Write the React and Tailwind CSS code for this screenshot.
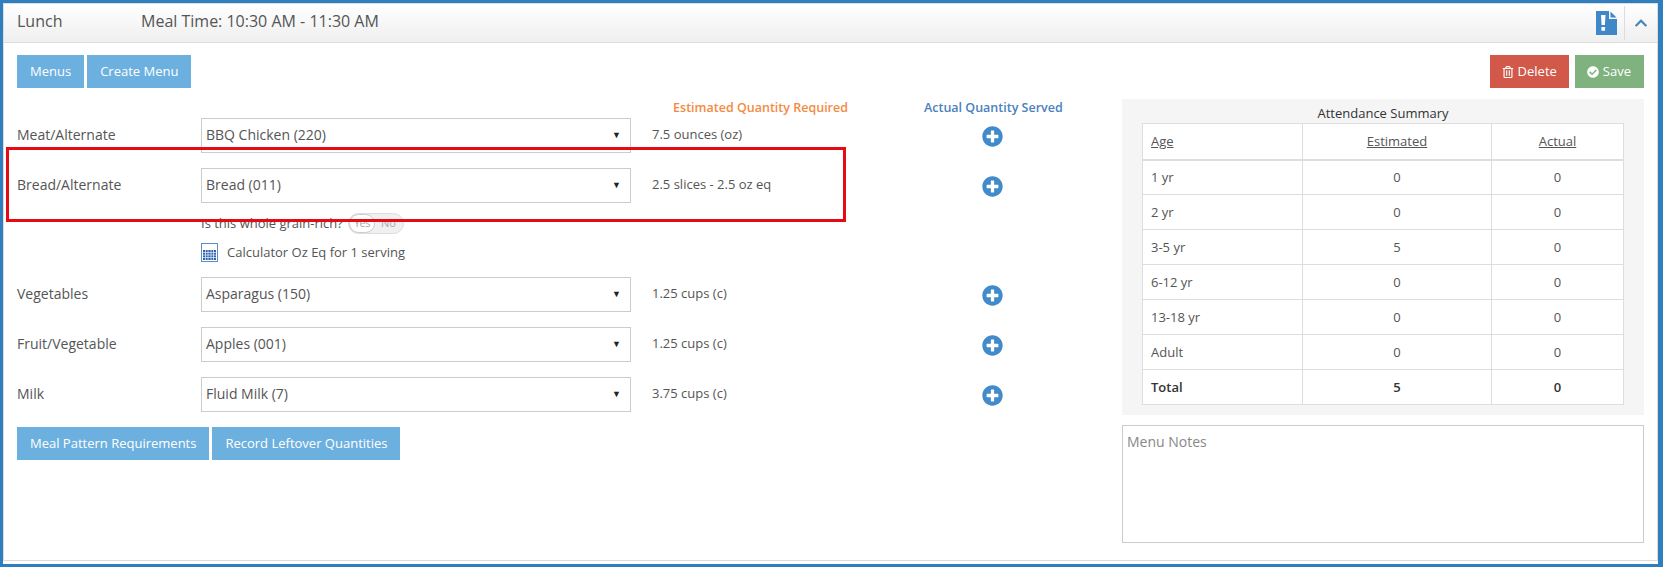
import React from 'react';
import { FaCheckCircle, FaChevronUp, FaPlusCircle, FaRegTrashAlt } from 'react-icons/fa';

const ageRows = [
  ['1 yr', 0, 0],
  ['2 yr', 0, 0],
  ['3-5 yr', 5, 0],
  ['6-12 yr', 0, 0],
  ['13-18 yr', 0, 0],
  ['Adult', 0, 0],
];

const Btn = ({ children, className = 'bg-[#6cb0e0]' }) => (
  <button className={`h-[33px] px-[13px] text-[13px] text-white ${className}`}>{children}</button>
);

const MealRow = ({ label, food, qty, className = '' }) => (
  <div className={`flex h-[35px] items-center ${className}`}>
    <div className="w-[184px] pb-[2px] text-[14px] text-[#555]">{label}</div>
    <div className="flex h-[35px] w-[430px] items-center justify-between border border-[#ccc] pb-[2px] pl-[4px] pr-[9px] text-[14px] text-[#555]">
      <span>{food}</span>
      <span className="text-[9px] text-[#222]">▼</span>
    </div>
    <div className="ml-[21px] w-[300px] pb-[2px] text-[#555]">{qty}</div>
    <div className="flex w-[81px] justify-center pt-[2px] text-[#428bca]">
      <FaPlusCircle size={21} />
    </div>
  </div>
);

const DocAlert = () => (
  <svg width="21" height="24" viewBox="0 0 21 24">
    <path d="M0 0h13v8h8v16H0z" fill="#3f87c6" />
    <path d="M14.5 0.5l6 6h-6z" fill="#3f87c6" />
    <path d="M5 4h4.5l-.6 10H5.6z M5.4 16h3.7v3.7H5.4z" fill="#fff" />
  </svg>
);

const CalcIcon = () => (
  <svg width="17" height="19" viewBox="0 0 17 19" fill="none">
    <rect x="0.5" y="0.5" width="16" height="18" fill="#fff" stroke="#5b8fc7" />
    <rect x="2" y="7" width="13" height="10" fill="#2f62a8" />
    <path d="M2 9.5h13M2 12h13M2 14.5h13M4.5 7v10M7 7v10M10 7v10M12.5 7v10" stroke="#dce8f5" strokeWidth="0.8" />
  </svg>
);

const App = () => {
  return (
    <div className="relative h-[567px] border-t-[3px] border-r-[5px] border-b-[3px] border-l-[3px] border-[#2f7ebd] bg-white font-['Open_Sans',sans-serif] text-[13px] text-[#555]">
      <div className="h-[558px] border border-[#ddd]">
        <div className="flex h-[39px] items-center border-b border-[#ddd] bg-gradient-to-b from-white to-[#efefef] pl-[13px]">
          <div className="w-[124px] pb-[4px] text-[16px] text-[#555]">Lunch</div>
          <div className="pb-[4px] text-[16px] text-[#555]">Meal Time: 10:30 AM - 11:30 AM</div>
          <div className="ml-auto flex h-[34px] items-center">
            <DocAlert />
            <div className="ml-[7px] flex h-[34px] w-[33px] items-center justify-center border-l border-[#ddd] text-[#4a86b8]">
              <FaChevronUp size={14} />
            </div>
          </div>
        </div>

        <div className="flex items-start justify-between pl-[13px] pr-[13px] pt-[12px]">
          <div className="w-[1016px] shrink-0">
            <div className="flex gap-[3px]">
              <Btn>Menus</Btn>
              <Btn>Create Menu</Btn>
            </div>

            <div className="mt-[10px] flex h-[20px] items-center whitespace-nowrap text-[12.5px] font-semibold">
              <div className="w-[831px] shrink-0 text-right text-[#f58a42]">Estimated Quantity Required</div>
              <div className="ml-[76px] text-[#4a7fc0]">Actual Quantity Served</div>
            </div>

            <MealRow label="Meat/Alternate" food="BBQ Chicken (220)" qty="7.5 ounces (oz)" />
            <MealRow className="mt-[15px]" label="Bread/Alternate" food="Bread (011)" qty="2.5 slices - 2.5 oz eq" />

            <div className="ml-[184px] mt-[10px] flex h-[21px] items-center">
              <span>Is this whole grain-rich?</span>
              <span className="ml-[5px] flex h-[21px] w-[56px] items-center rounded-full border border-[#ddd] bg-[#f0f0f0] text-[11px] text-[#aaa]">
                <span className="flex h-[19px] w-[26px] items-center justify-center rounded-full border border-[#ccc] bg-white tracking-tighter">Yes</span>
                <span className="ml-[6px]">No</span>
              </span>
            </div>
            <div className="ml-[184px] mt-[9px] flex h-[19px] items-center gap-[9px]">
              <CalcIcon />
              <span>Calculator Oz Eq for 1 serving</span>
            </div>

            <MealRow className="mt-[15px]" label="Vegetables" food="Asparagus (150)" qty="1.25 cups (c)" />
            <MealRow className="mt-[15px]" label="Fruit/Vegetable" food="Apples (001)" qty="1.25 cups (c)" />
            <MealRow className="mt-[15px]" label="Milk" food="Fluid Milk (7)" qty="3.75 cups (c)" />

            <div className="mt-[15px] flex gap-[3px]">
              <Btn>Meal Pattern Requirements</Btn>
              <Btn>Record Leftover Quantities</Btn>
            </div>
          </div>

          <div className="flex w-[522px] flex-col">
            <div className="flex justify-end gap-[6px]">
              <Btn className="flex items-center gap-[4px] bg-[#d2584a] !px-[12px]">
                <FaRegTrashAlt size={12} /> Delete
              </Btn>
              <Btn className="flex items-center gap-[4px] bg-[#7fb27f] !pl-[12px]">
                <FaCheckCircle size={12} /> Save
              </Btn>
            </div>

            <div className="mt-[11px] h-[316px] bg-[#f5f5f5] px-[20px] pt-[5px]">
              <div className="h-[19px] text-center text-[13px] leading-[19px] text-[#333]">Attendance Summary</div>
              <table className="w-[482px] table-fixed border-collapse bg-white">
                <thead>
                  <tr className="h-[36px]">
                    <th className="w-[160px] border border-b-2 border-[#ddd] pl-[8px] text-left font-normal underline">Age</th>
                    <th className="w-[189px] border border-b-2 border-[#ddd] font-normal underline">Estimated</th>
                    <th className="border border-b-2 border-[#ddd] font-normal underline">Actual</th>
                  </tr>
                </thead>
                <tbody>
                  {ageRows.map(([age, est, act]) => (
                    <tr key={age} className="h-[35px]">
                      <td className="border border-[#ddd] pl-[8px] pt-[1px]">{age}</td>
                      <td className="border border-[#ddd] pt-[1px] text-center">{est}</td>
                      <td className="border border-[#ddd] pt-[1px] text-center">{act}</td>
                    </tr>
                  ))}
                  <tr className="h-[35px] font-semibold text-[#333]">
                    <td className="border border-[#ddd] pl-[8px] pt-[1px]">Total</td>
                    <td className="border border-[#ddd] pt-[1px] text-center">5</td>
                    <td className="border border-[#ddd] pt-[1px] text-center">0</td>
                  </tr>
                </tbody>
              </table>
            </div>

            <div className="mt-[10px] h-[118px] border border-[#ccc] px-[4px] py-[5px] text-[14px] text-[#888]">Menu Notes</div>
          </div>
        </div>
      </div>

      {/* annotation drawn over the screenshot */}
      <div className="absolute left-[3px] top-[144px] h-[75px] w-[840px] border-[3px] border-[#e60b12]" />
    </div>
  );
};

export default App;
